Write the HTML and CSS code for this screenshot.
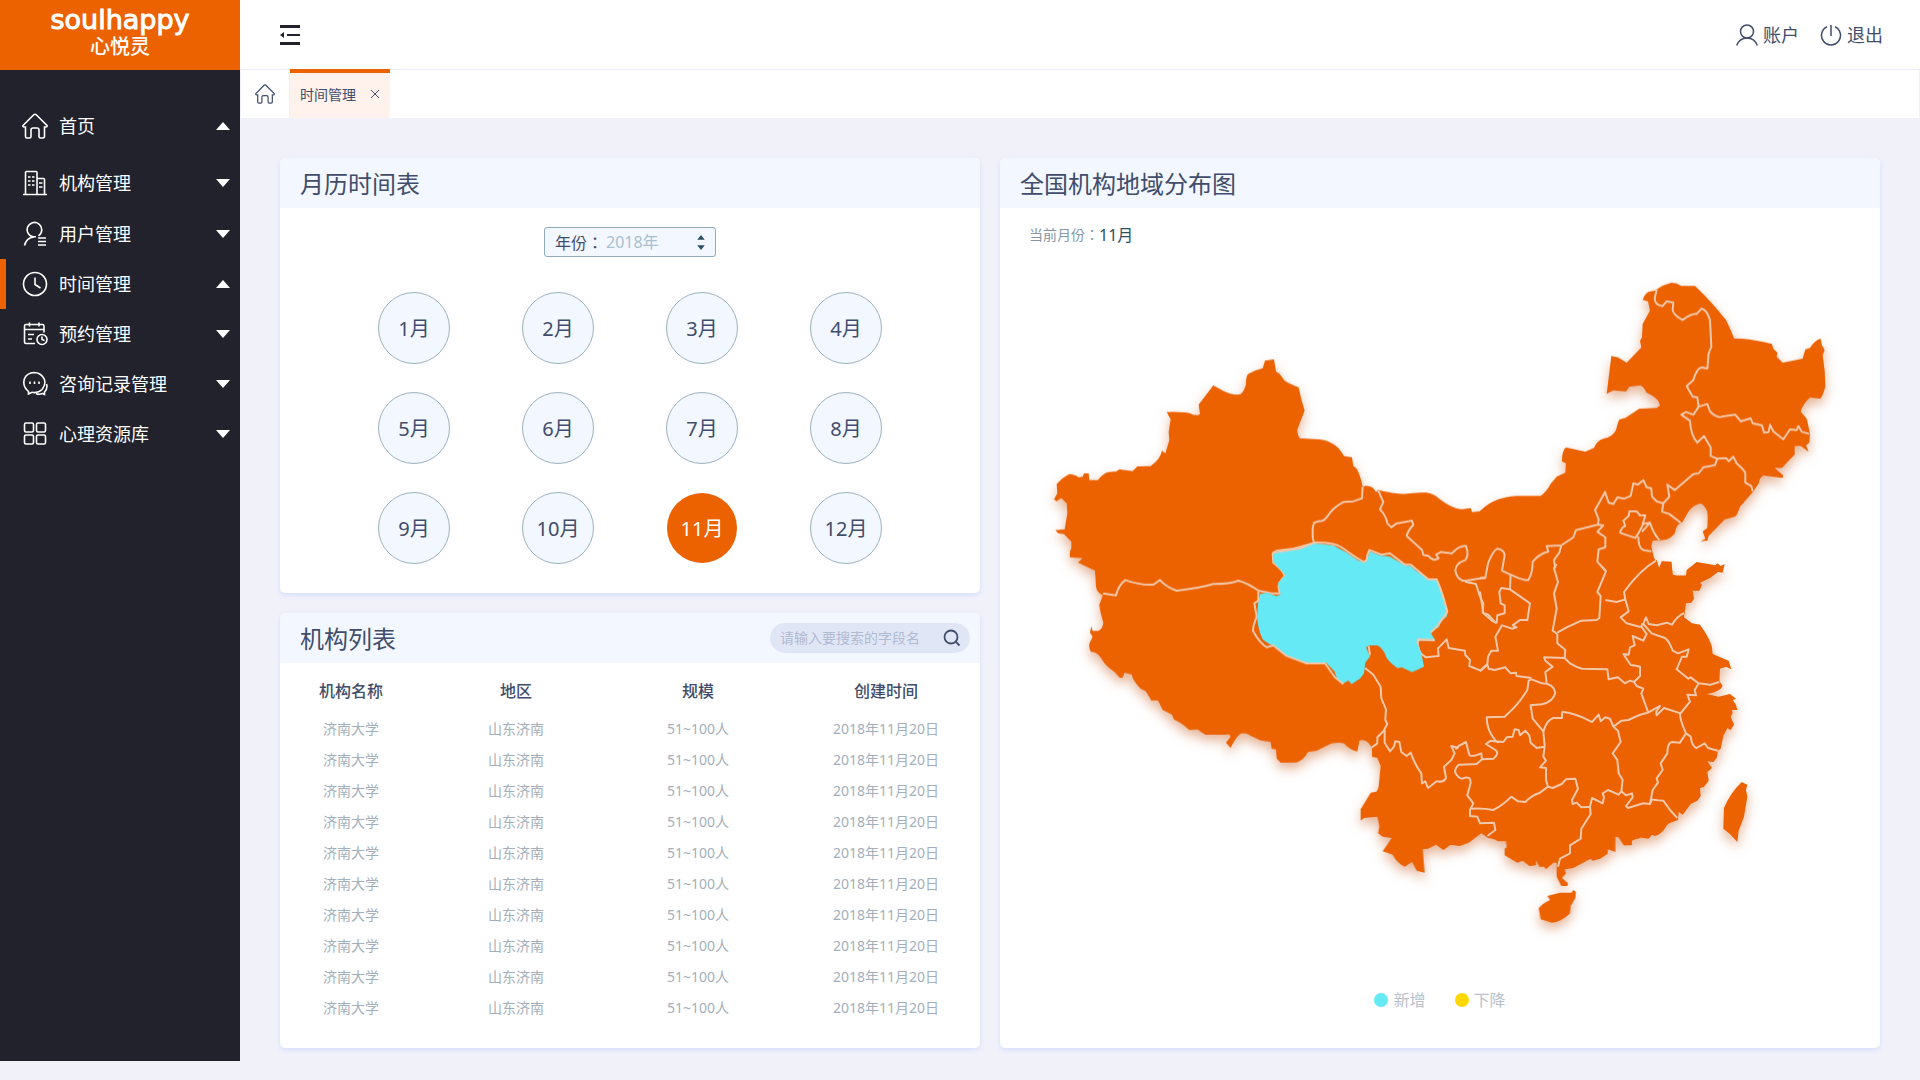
FILE: index.html
```html
<!DOCTYPE html>
<html lang="zh-CN">
<head>
<meta charset="utf-8">
<meta name="viewport" content="width=device-width, initial-scale=1">
<title>时间管理 - 心悦灵</title>
<link rel="stylesheet" href="styles.css">
</head>
<body>
<div class="app">
  <aside class="sidebar">
    <a class="brand" href="#"><span class="brand-en">soulhappy</span><span class="brand-cn">心悦灵</span></a>
    <nav class="menu">
      <a class="menu-item menu-home" href="#">
        <svg class="icon" viewBox="0 0 26 26"><path d="M1 12.500L11.500 2Q13 .500 14.500 2L25 12.500Q25.400 14 24 14H22.500V23.500Q22.500 25 21 25H18.500Q17 25 17 23.500V17Q17 15 15 15H11Q9 15 9 17V23.500Q9 25 7.500 25H5Q3.500 25 3.500 23.500V14H2Q.600 14 1 12.500Z"/></svg>
        <span>首页</span><i class="caret caret-up"></i></a>
      <a class="menu-item" href="#">
        <svg class="icon" viewBox="0 0 26 26"><path d="M1 24.500H25M3.500 24V2.500Q3.500 1.500 4.500 1.500H14Q15 1.500 15 2.500V24M15 8.500H21.500Q22.500 8.500 22.500 9.500V24M6 7H8.500M10 7H12.500M6 11H8.500M10 11H12.500M6 15H8.500M10 15H12.500M17 13H20.500M17 17H20.500"/></svg>
        <span>机构管理</span><i class="caret"></i></a>
      <a class="menu-item" href="#">
        <svg class="icon" viewBox="0 0 26 26"><path d="M12 16A7.300 7.300 0 1 1 16.500 14.800M12 16Q4.500 16.500 2.500 24.500M16 17H24M16 20.500H24M16 24H24M10 15.700L14 15.700"/></svg>
        <span>用户管理</span><i class="caret"></i></a>
      <a class="menu-item is-active" href="#">
        <svg class="icon" viewBox="0 0 26 26"><circle cx="13" cy="13" r="11.500"/><path d="M13 6.500V13.500L18.500 17"/></svg>
        <span>时间管理</span><i class="caret caret-up"></i></a>
      <a class="menu-item" href="#">
        <svg class="icon" viewBox="0 0 26 26"><path d="M13 22.500H4Q2.500 22.500 2.500 21V5Q2.500 3.500 4 3.500H20.500Q22 3.500 22 5V11.500M2.500 8.500H22M7.500 1.500V5.500M17 1.500V5.500M6 13.500H12M6 18H10M20 15.500V18.500L22.500 19.500"/><circle cx="20" cy="18.500" r="5"/></svg>
        <span>预约管理</span><i class="caret"></i></a>
      <a class="menu-item" href="#">
        <svg class="icon" viewBox="0 0 26 26"><path d="M6.500 20.500V23L10 21.300Q16 22.500 20 18.500Q24.500 13 22 7.500Q18.500 1.500 12 1.500Q5 2 2.500 7.500Q0 15 6.500 20.500ZM14 22.500Q17 24 20.500 22.500L22.500 23.500V21Q26 18 24.500 13"/><path d="M8 10.500V13M12.500 10.500V13M17 10.500V13"/></svg>
        <span>咨询记录管理</span><i class="caret"></i></a>
      <a class="menu-item" href="#">
        <svg class="icon" viewBox="0 0 26 26"><rect x="2.500" y="2" width="9" height="9" rx="1.500"/><rect x="14.500" y="2" width="9" height="9" rx="1.500"/><rect x="2.500" y="14" width="9" height="9" rx="1.500"/><rect x="14.500" y="14" width="9" height="9" rx="1.500"/></svg>
        <span>心理资源库</span><i class="caret"></i></a>
    </nav>
  </aside>

  <div class="page">
    <header class="topbar">
      <button class="fold" type="button" aria-label="收起菜单">
        <svg viewBox="0 0 20 20" width="20" height="20"><path d="M0 0H20V3H0ZM7 9H20V11H7ZM0 17H20V20H0ZM0 10L4 7V13Z"/></svg>
      </button>
      <div class="account">
        <a href="#"><svg viewBox="0 0 22 22"><circle cx="11" cy="7.500" r="6.500"/><path d="M.700 21.500Q3.500 14 11 14Q18.500 14 21.300 21.500"/></svg><span>账户</span></a>
        <a href="#"><svg viewBox="0 0 22 22"><path d="M11 1V12M7 2.800A9.500 9.500 0 1 0 15 2.800"/></svg><span>退出</span></a>
      </div>
    </header>
    <div class="tabs">
      <a class="tab-home" href="#" aria-label="首页"><svg viewBox="0 0 26 26"><path d="M1 12.500L11.500 2Q13 .500 14.500 2L25 12.500Q25.400 14 24 14H22.500V23.500Q22.500 25 21 25H18.500Q17 25 17 23.500V17Q17 15 15 15H11Q9 15 9 17V23.500Q9 25 7.500 25H5Q3.500 25 3.500 23.500V14H2Q.600 14 1 12.500Z"/></svg></a>
      <div class="tab"><a href="#">时间管理</a><button type="button" aria-label="关闭"><svg viewBox="0 0 10 10"><path d="M1 1L9 9M9 1L1 9"/></svg></button></div>
    </div>

    <main class="content">
      <section class="card">
        <div class="card-head"><h2>月历时间表</h2></div>
        <div class="calendar">
          <div class="year">
            <label for="year" lang="zh-TW">年份：</label>
            <select id="year"><option>2018年</option></select>
            <svg viewBox="0 0 8 16"><path d="M4 0L8 5H0ZM4 16L0 11H8Z"/></svg>
          </div>
          <div class="months">
            <button type="button">1月</button><button type="button">2月</button><button type="button">3月</button><button type="button">4月</button>
            <button type="button">5月</button><button type="button">6月</button><button type="button">7月</button><button type="button">8月</button>
            <button type="button">9月</button><button type="button">10月</button><button type="button" class="is-current">11月</button><button type="button">12月</button>
          </div>
        </div>
      </section>

      <section class="card card-list">
        <div class="card-head"><h2>机构列表</h2>
          <form class="search"><input type="text" aria-label="搜索" placeholder="请输入要搜索的字段名"><button type="button" aria-label="搜索"><svg viewBox="0 0 18 18"><circle cx="8" cy="8" r="6.500"/><path d="M12.500 12.500L16.500 16.500"/></svg></button></form>
        </div>
        <table class="orgs">
          <colgroup><col class="c-name"><col class="c-area"><col class="c-size"><col class="c-date"></colgroup>
          <thead><tr><th>机构名称</th><th>地区</th><th>规模</th><th>创建时间</th></tr></thead>
          <tbody>
            <tr><td>济南大学</td><td>山东济南</td><td>51~100人</td><td>2018年11月20日</td></tr>
            <tr><td>济南大学</td><td>山东济南</td><td>51~100人</td><td>2018年11月20日</td></tr>
            <tr><td>济南大学</td><td>山东济南</td><td>51~100人</td><td>2018年11月20日</td></tr>
            <tr><td>济南大学</td><td>山东济南</td><td>51~100人</td><td>2018年11月20日</td></tr>
            <tr><td>济南大学</td><td>山东济南</td><td>51~100人</td><td>2018年11月20日</td></tr>
            <tr><td>济南大学</td><td>山东济南</td><td>51~100人</td><td>2018年11月20日</td></tr>
            <tr><td>济南大学</td><td>山东济南</td><td>51~100人</td><td>2018年11月20日</td></tr>
            <tr><td>济南大学</td><td>山东济南</td><td>51~100人</td><td>2018年11月20日</td></tr>
            <tr><td>济南大学</td><td>山东济南</td><td>51~100人</td><td>2018年11月20日</td></tr>
            <tr><td>济南大学</td><td>山东济南</td><td>51~100人</td><td>2018年11月20日</td></tr>
          </tbody>
        </table>
      </section>

      <section class="card card-map">
        <div class="card-head"><h2>全国机构地域分布图</h2></div>
        <p class="current"><span lang="zh-TW">当前月份：</span><strong>11月</strong></p>
        <svg class="map" viewBox="0 0 880 710" role="img" aria-label="全国机构地域分布图">
          <g class="land">
            <!-- 西北 -->
            <path transform="translate(0 -100) scale(.33333)" d="M640 706L668 722Q700 738 722 732Q735 722 738 700Q738 672 748 670Q765 660 788 655L795 632L822 628L828 664Q842 672 852 690Q868 702 896 712L904 748L914 782L892 838Q892 855 900 865L958 868Q985 872 1000 882Q1018 892 1032 918L1056 922L1060 948L1070 956Q1082 978 1088 1010Q1104 1004 1120 1014L1128 1026L1135 1020Q1180 1030 1210 1032Q1250 1026 1280 1028Q1300 1030 1320 1048Q1355 1075 1384 1078L1412 1074L1416 1086L1440 1084Q1470 1058 1500 1048V1350H309L308 1335Q290 1328 288 1310L285 1262L234 1238L248 1224L210 1222Q208 1205 214 1195V1175L192 1152L175 1150L166 1140L194 1138L202 1090L200 1060L184 1044L170 1054L162 1048L172 1030L170 1002Q190 980 208 972Q230 975 236 982L248 980L252 970H266L268 990H294Q308 970 325 966Q340 964 348 965L358 958L398 963L412 949L452 948Q480 930 486 902L496 910L508 870L506 846L512 808L500 786Q550 784 570 790Q590 800 600 792L596 764Z"/>
            <!-- 东北 -->
            <path transform="translate(480 0) scale(.33333)" d="M530 118Q550 104 575 98Q590 98 604 108H645Q690 150 738 210Q755 245 762 265Q810 266 850 276L876 282L880 296L892 308L890 320L908 338L968 326L976 298L990 294Q1005 270 1022 266L1026 286L1034 300L1028 316Q1036 360 1036 410Q1028 440 1020 446L990 442Q966 465 962 485L980 506Q986 530 990 552L988 578L978 586L986 606L962 588H944V614L924 634L906 654H884L910 676L908 684L850 676Q838 684 836 700L820 724L780 770Q772 795 765 800L734 808L686 858L682 872L662 874L676 866L668 844L682 834Q684 800 682 784Q672 762 660 760Q635 766 622 790L608 816Q590 820 584 850Q570 868 550 870L518 872L514 890L522 924L530 936L536 956L546 934L574 936L578 974L570 1020H0V784Q40 742 110 738H182Q200 725 212 702L230 680L256 668L258 640L246 634Q246 600 258 592L316 605L342 594Q350 572 370 566Q400 560 408 540Q412 520 418 508L436 504L478 476L530 474L540 466Q538 445 500 428Q490 408 482 406L448 410L438 424L400 421L380 432L394 318L414 322L440 338L484 292L480 272L486 262L488 222L510 182L504 154L488 150Q496 126 510 124L526 122Z"/>
            <!-- 华东 -->
            <g transform="translate(480 310) scale(.33333)">
              <path d="M0 0H530L538 26L546 4L574 6L578 44Q600 48 618 46L620 30L650 6L706 16L712 10L722 18L734 12L728 38L714 36L690 54L660 68L666 74L658 92L638 92L642 116L634 128L618 130L612 172L636 190L660 194Q690 235 696 262L698 282L746 302L754 328L738 320L720 326L718 362L728 378Q720 395 680 402L716 410L750 402L768 416L758 420L768 434L772 450L756 450L758 460L752 470L762 494L752 510L742 504L730 528L722 566L714 572L710 594L700 606L682 604L696 624L682 636L686 662L672 680L660 684L662 708L652 722L632 732L608 764L596 756L594 780Q560 790 558 800Q545 822 525 828L516 824L506 836L476 832L456 842L454 856H432L414 828H406L100 800H0Z"/>
              <path d="M785 666L802 674L798 690L802 710L792 770L776 812L772 846L750 822L730 806L732 744Q750 700 785 666Z"/>
            </g>
            <!-- 西南 -->
            <path transform="translate(40 190) scale(.33333)" d="M190 440V462L178 495Q180 515 190 548Q188 568 174 573H158L154 558L150 578L158 590L148 612Q146 630 154 636Q170 636 182 652Q196 678 222 694L240 714L248 712L254 698L275 703L280 718Q290 734 302 746L318 754L334 781H354L368 810L396 824L402 838Q425 848 448 870L472 868L496 884Q540 884 568 883L572 890L558 908L572 924Q585 895 600 882Q615 876 630 886L662 901L692 906L695 926L708 928L710 955L722 968L770 967Q790 962 804 936L830 932L874 910Q900 906 912 910Q930 930 952 934L958 902Q972 896 985 908L996 922V950L1012 954L1022 978L1016 1040Q1014 1056 1006 1057L1020 1140H1380V440Z"/>
            <!-- 华南 -->
            <g transform="translate(340 390) scale(.33333)">
              <path d="M110 455L92 458L62 508V542L72 534L112 530L116 548L118 560L114 580L128 590L155 594L128 634L158 644Q170 668 194 680L216 666L230 692L254 698L248 628L264 626L288 614L310 630L332 614L358 618L386 608L424 580L444 594Q465 596 474 604H498L500 622L494 626V646L532 668L548 662L568 678L588 676V660L598 680H612L618 688L640 668H650V710L664 738H682L684 730L666 714L678 700L674 688L700 684L740 662L752 656L758 662L780 656L802 642L804 628L826 636V590L836 592L852 616L876 614L874 600L900 595V300H200Z"/>
              <path d="M622 768L660 758H694L700 750L708 756L706 774L692 798L690 820Q665 845 636 848L602 838L596 805Q605 792 630 780Z"/>
            </g>
          </g>
          <g class="borders">
            <path transform="translate(0 -100) scale(.33333)" d="M1088 1010L1086 1045L1060 1054L1030 1056Q1000 1072 985 1095Q972 1115 960 1113L942 1118L938 1135V1160L942 1180Q900 1190 880 1196L830 1202L818 1210L820 1238Q850 1262 854 1278Q832 1300 836 1315L840 1330H815L776 1322M309 1330L348 1336Q355 1305 376 1290Q420 1306 460 1304L480 1290Q500 1312 530 1322Q600 1314 640 1302Q690 1302 715 1292Q740 1298 776 1322M1135 1022L1150 1056L1140 1078Q1160 1100 1162 1120L1174 1132L1190 1120L1236 1112L1240 1124Q1222 1145 1220 1158L1266 1200L1270 1215L1286 1218Q1300 1236 1316 1224L1308 1214L1322 1206L1356 1210Q1378 1185 1398 1188Q1408 1215 1396 1230Q1366 1240 1366 1262Q1370 1285 1388 1292H1400L1456 1282"/>
            <path transform="translate(480 0) scale(.33333)" d="M0 984L16 984L24 940Q40 900 52 896Q72 900 74 915L66 962L92 974Q130 992 145 990Q158 970 158 935Q180 910 205 905L200 888L244 886L280 862L288 840L354 824L356 808L345 780L375 726L386 758L400 762L412 742L432 746L452 738L460 700L474 704L490 690L500 712L514 715L516 740L530 754L550 760L568 740L562 704L584 720L640 672L656 670L670 652L705 645L712 626L692 618V592L672 558L652 578Q632 555 630 512L604 494L618 486L640 494L656 470L652 442L638 440L620 408L640 390Q650 355 665 352L682 356L686 310L694 290L690 210Q680 178 664 176L650 192Q635 190 608 210Q580 195 578 180L580 158L560 154L548 168Q524 165 524 145L530 118M656 470L682 462L690 484Q710 505 725 500L766 494L782 514L812 505L818 520L846 526L852 548L866 546L870 524L880 544L910 568L930 538L950 540L955 528L965 545L988 552M712 626L738 624L746 634L760 620L770 640Q790 658 796 668V698L814 708L818 724M550 760L546 785L568 792L602 818M354 824L370 826L352 845L376 862V892L356 898L352 935L378 964M244 886L238 908L222 930L226 955M448 784L470 784L480 796H496L486 830L475 850L466 864L420 848Q425 830 436 828L430 812L446 798ZM475 860Q475 895 490 900L514 904M486 845L510 818Q520 850 538 870M488 822L510 818"/>
            <path transform="translate(480 310) scale(.33333)" d="M254 294L192 292L196 302L218 320L196 336L200 370M232 222V250L256 270L254 294L270 310Q290 322 306 326L382 328L386 358L414 352L434 370L450 362L462 366L480 348V320Q462 316 452 315L430 282L446 284L450 262L464 256L458 228L490 242L500 222L484 200L488 190M462 366L470 378L490 386L484 400L504 456M246 455Q290 460 336 486L356 464L362 484L376 472L390 476L400 500M190 515Q200 480 220 474H246V455M400 500L425 482L445 480Q480 462 504 458L540 438L528 456L530 466L552 444L602 460M400 500L414 512L422 546L398 580L412 600L416 640L428 660L424 694M204 680L218 684L245 672L258 658L286 656L294 686L276 720L278 732L290 728L304 742L330 740L336 714L368 730L372 712L368 700L384 690L416 704L424 694L438 706L456 700L458 712L438 738L444 744L490 730L510 732L516 718Q520 720 550 722L570 750L592 774M510 732L518 690L534 668L530 655L548 630L542 610L562 580Q562 550 575 546L600 548L618 520Q600 480 600 462L630 425L622 404L648 406L644 390L656 370L632 352L625 356L590 328L606 290H620L626 268L594 280L578 272Q566 240 555 234L515 220L490 192L498 172L506 192L530 196L560 188L576 194Q595 165 612 160M656 370L690 374L718 366M618 520L632 530Q636 560 650 564L674 550L684 564L714 572M488 200H478L440 190L422 172L446 154L436 118L410 126L376 120M436 118L432 96Q480 30 528 2M232 218L260 202L304 182L350 180L358 174L362 108L352 96L378 34L366 20M232 222L218 212L230 146L222 100L234 66L222 25L230 12M330 740L332 762L304 806L302 836L270 856V880L240 896L234 920M0 332L22 312L24 290L34 272H54L46 230L66 196L96 206L110 202L98 196L120 180H142L150 130L90 88L64 84L58 96L62 130L74 136V160L52 166L50 188L38 184L10 160L0 95M90 88L92 42"/>
            <path transform="translate(340 390) scale(.33333)" d="M426 358L424 340Q395 352 388 345L378 306L356 318L346 328M426 358L410 372L356 374Q343 385 346 398Q356 416 368 416Q392 405 392 428L382 466L400 490L390 510V528L412 530L420 550L462 548L466 570L442 588M395 506Q430 504 460 510Q490 495 514 470L534 484L556 486Q575 465 600 458L624 440M426 358L460 356Q480 340 466 330L438 312L452 302L478 306M575 118L566 122L562 150Q540 185 520 205L494 230L440 232Q440 270 465 300L475 308M470 304L490 306L500 292L518 290L524 268L536 270L540 286L556 272L568 286L572 308L590 324L612 320M575 118L606 130Q640 130 646 158Q640 185 605 193L572 196L578 236L610 274L614 318L610 350L618 362L600 382L618 384V420L624 440M442 74L446 86L464 90L496 82L512 100L528 98L530 108L575 114"/>
            <path transform="translate(40 190) scale(.33333)" d="M1184 600L1134 598Q1130 620 1144 642L1158 652L1196 648L1194 625L1220 598L1226 624L1275 632L1276 645L1290 660L1288 678L1322 692L1342 674M975 684L1000 704L1022 740L1024 775L1038 808L1036 840L1042 852L1030 874L1012 892V910L996 922M1034 870V908L1050 934L1062 920L1066 904L1078 906L1084 936L1100 948L1112 938Q1125 975 1144 1000L1146 1030L1156 1024L1164 1044L1190 1024Q1212 1028 1218 1014L1212 980L1234 960L1244 940L1234 918L1256 924M1275 425L1308 432L1320 470L1330 490L1328 518L1345 524L1368 550"/>
          </g>
          <!-- 青海 -->
          <g transform="translate(40 190) scale(.33333)">
            <path class="region-new" d="M700 338L780 325Q810 312 825 310L880 316Q920 335 955 362Q975 372 984 350L988 334L1020 346L1050 350L1095 376L1112 378Q1150 415 1190 422Q1205 450 1212 470L1224 515L1220 530Q1200 545 1198 560L1172 578L1186 602H1140L1130 606L1144 640L1152 680L1130 690L1116 696L1085 682L1072 684Q1045 665 1038 650Q1030 625 1012 616H988L978 622L990 650L976 668L972 700L960 716L935 732L925 722L906 732Q890 720 884 695L858 668H800L745 650L715 630L700 618Q675 605 668 598Q650 560 652 520Q652 490 660 462L680 458L710 468L722 462L714 430L736 405L700 365Z"/>
            <path class="region-line" d="M700 338L780 325L822 308Q880 306 905 322Q950 355 972 366Q982 362 982 345L988 330L1025 344L1050 340L1095 374H1112L1165 418H1190Q1205 450 1222 515L1190 560L1172 578M655 452V482L643 490L650 530Q636 565 640 575Q660 610 680 622L700 616L740 648L800 670H855L885 712L910 732M986 618L990 645M1184 600L1134 598L1132 610"/>
          </g>
        </svg>
        <ul class="legend"><li class="is-new">新增</li><li class="is-drop">下降</li></ul>
      </section>
    </main>
  </div>
</div>
</body>
</html>
```
FILE: styles.css
```css
* { box-sizing: border-box; }

body {
  margin: 0;
  background: #f1f1fa;
  color: #414d6b;
  font-family: "Noto Sans", "Noto Sans CJK SC", sans-serif;
  font-size: 14px;
}

[lang="zh-TW"] { font-family: "Noto Sans", "Noto Sans CJK TC", sans-serif; }

a { color: inherit; text-decoration: none; }
h2, p, ul { margin: 0; padding: 0; }
button, input, select { font: inherit; color: inherit; border: 0; background: none; padding: 0; margin: 0; }
svg { display: block; }

.app { display: flex; }

/* sidebar */
.sidebar { flex: 0 0 240px; background: #21222b; color: #fff; }

.brand {
  display: flex;
  flex-direction: column;
  align-items: center;
  gap: 3px;
  height: 70px;
  padding-top: 6px;
  background: #ec6100;
}
.brand-en { font: 27px/28px "DejaVu Sans", sans-serif; -webkit-text-stroke: 1px #fff; }
.brand-cn { font-size: 20px; line-height: 20px; font-weight: 500; }

.menu { padding-top: 31px; }
.menu-item {
  display: flex;
  align-items: center;
  height: 50px;
  padding: 0 10px 0 16px;
  border-left: 6px solid transparent;
  font-size: 18px;
}
.menu-home { margin-bottom: 7px; }
.menu-home + .menu-item { margin-bottom: 1px; }
.menu-item.is-active { border-left-color: #ec6100; }
.menu-item span { flex: 1; margin-left: 11px; padding-bottom: 2px; }
.icon { width: 26px; height: 26px; fill: none; stroke: #fff; stroke-width: 1.6; }
.caret { width: 14px; height: 8px; background: #fff; clip-path: polygon(0 0, 100% 0, 50% 100%); }
.caret-up { clip-path: polygon(50% 0, 100% 100%, 0 100%); }

/* top bar */
.page { flex: 1; min-width: 0; }
.topbar {
  display: flex;
  align-items: center;
  justify-content: space-between;
  height: 70px;
  padding: 0 37px 0 40px;
  background: #fff;
  border-bottom: 1px solid #ededf9;
}
.fold svg { fill: #21222b; }
.account { display: flex; gap: 21px; font-size: 18px; }
.account a { display: flex; align-items: center; gap: 5px; }
.account span { padding-bottom: 2px; }
.account svg { width: 22px; height: 22px; fill: none; stroke: #414d6b; stroke-width: 1.5; }

.tabs { display: flex; height: 48px; background: #fff; border: solid #f1f1fa; border-width: 0 1px; }
.tab-home {
  display: flex;
  align-items: center;
  justify-content: center;
  width: 49px;
  border-right: 1px solid #f1f1fa;
}
.tab-home svg { width: 20px; height: 20px; fill: none; stroke: #414d6b; stroke-width: 1.6; }
.tab {
  display: flex;
  align-items: center;
  gap: 14px;
  margin-top: -1px;
  padding: 0 10px 3px;
  border-top: 4px solid #ec6100;
  background: #fff1eb;
}
.tab svg { width: 10px; height: 10px; fill: none; stroke: #414d6b; }

/* cards */
.content {
  display: grid;
  grid-template-columns: 35fr 44fr;
  grid-template-rows: auto auto;
  gap: 20px;
  padding: 40px 40px 13px;
}
.card { border-radius: 5px; background: #fff; box-shadow: 0 2px 5px #d3dffb; overflow: hidden; }
.card-map { grid-column: 2; grid-row: 1 / 3; }
.card-head {
  display: flex;
  align-items: center;
  justify-content: space-between;
  height: 50px;
  padding: 0 10px 0 20px;
  background: #f3f7ff;
}
.card-head h2 { padding-bottom: 2px; font-size: 24px; font-weight: 400; }

.calendar { display: flex; flex-direction: column; align-items: center; gap: 35px; padding: 19px 0 29px; }
.year {
  display: flex;
  align-items: center;
  width: 172px;
  height: 30px;
  padding: 0 10px;
  border: 1px solid #8fabbd;
  border-radius: 3px;
  background: #f3f7ff;
  font-size: 16px;
}
.year select { flex: 1; margin-left: 3px; appearance: none; color: #a9c1cf; outline: 0; }
.year svg { width: 8px; height: 15px; fill: #2d5063; }

.months { display: grid; grid-template-columns: repeat(4, 72px); gap: 28px 72px; }
.months button {
  height: 72px;
  padding-bottom: 2px;
  border: 1px solid #9bb2c0;
  border-radius: 50%;
  background: #f3f7ff;
  font-size: 20px;
}
.months .is-current { border-color: transparent; background: #ec6100 padding-box; color: #fff; }

.search { display: flex; align-items: center; width: 200px; height: 30px; padding: 0 9px 0 10px; border-radius: 15px; background: #e1e6f7; }
.search input { flex: 1; min-width: 0; padding-bottom: 2px; outline: 0; }
.search input::placeholder { color: #b0bad3; opacity: 1; }
.search svg { width: 18px; height: 18px; fill: none; stroke: #414d6b; stroke-width: 1.8; }

.card-list { padding-bottom: 25px; }
.orgs { width: 100%; margin-top: 8px; border-collapse: collapse; table-layout: fixed; text-align: center; }
.c-name { width: 142px; }
.c-area { width: 188px; }
.c-size { width: 176px; }
.c-date { width: 194px; }
.orgs th { padding: 0 0 1px; font-size: 16px; font-weight: 500; line-height: 41px; }
.orgs td { padding: 0; color: #a3afba; line-height: 31px; }
.orgs th:last-child, .orgs td:last-child { padding-left: 6px; }

/* map */
.current { display: flex; align-items: center; height: 20px; margin: 16px 0 6px 29px; color: #8296a5; }
.current strong { color: #2d5063; font-size: 16px; font-weight: 400; }
.map { width: 100%; }
.land { fill: #ec6100; filter: drop-shadow(0 6px 6px rgba(205, 105, 50, .5)); }
.borders, .region-line { fill: none; stroke: #f2c8ac; stroke-width: 6; stroke-linejoin: round; }
.region-new { fill: #64e9f5; }
.legend { display: flex; justify-content: center; gap: 29px; padding: 28px 0 0; list-style: none; color: #b9c1ca; font-size: 16px; line-height: 24px; }
.legend li { display: flex; align-items: center; gap: 5px; }
.legend li::before { content: ""; width: 14px; height: 14px; border-radius: 50%; }
.is-new::before { background: #64e9f5; }
.is-drop::before { background: #ffd800; }
```
